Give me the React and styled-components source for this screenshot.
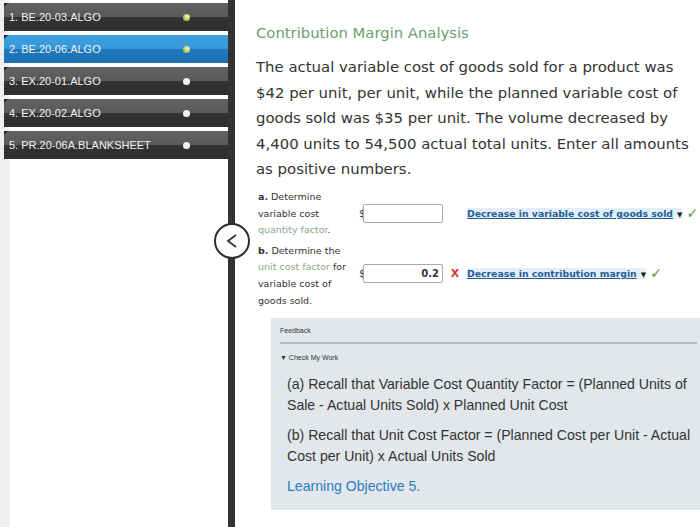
import React from 'react';
import styled, { createGlobalStyle } from 'styled-components';

const GlobalStyle = createGlobalStyle`
  html, body {
    margin: 0;
    padding: 0;
    background: #ffffff;
  }
  body {
    width: 700px;
    height: 527px;
    overflow: hidden;
  }
`;

const Page = styled.div`
  display: flex;
  width: 700px;
  height: 527px;
  overflow: hidden;
`;

const SideBar = styled.div`
  position: relative;
  width: 235px;
  flex-shrink: 0;
  display: flex;
  background: linear-gradient(to right, #efefef 10px, #ffffff 10px);
`;

const ItemList = styled.div`
  flex: 1;
  display: flex;
  flex-direction: column;
  gap: 4px;
  padding: 3px 0 0 4px;
`;

const Item = styled.div`
  position: relative;
  height: 28px;
  display: flex;
  align-items: center;
  justify-content: space-between;
  padding: 0 38px 0 5px;
  font-family: 'Liberation Sans', Arial, sans-serif;
  font-size: 11px;
  color: #f2f2f2;
  background: ${({ active }) =>
    active
      ? 'linear-gradient(to bottom, #3d9fe0 0%, #3698da 50%, #1f78bd 50%, #1b71b5 100%)'
      : 'linear-gradient(to bottom, #626262 0%, #5a5a5a 50%, #333333 50%, #2e2e2e 100%)'};

  &::before {
    content: '';
    position: absolute;
    left: 0;
    top: 0;
    border-top: 4px solid #222;
    border-right: 4px solid transparent;
  }
`;

const Dot = styled.span`
  width: 7px;
  height: 7px;
  border-radius: 50%;
  background: ${({ done }) =>
    done ? 'radial-gradient(circle at 65% 35%, #f3f7d0 0%, #b7cc5f 55%, #8fa53a 100%)' : '#f4f4f4'};
`;

const Divider = styled.div`
  width: 7px;
  background: #333333;
`;

const Toggle = styled.div`
  position: absolute;
  left: 214px;
  top: 223px;
  width: 32px;
  height: 32px;
  border-radius: 50%;
  border: 2px solid #2f2f2f;
  background: #ffffff;
  display: flex;
  align-items: center;
  justify-content: center;
`;

const Main = styled.div`
  flex: 1;
  min-width: 0;
  overflow: hidden;
  padding: 24px 0 0 21px;
  font-family: 'DejaVu Sans', Verdana, sans-serif;
  color: #333333;
`;

const Title = styled.h2`
  margin: 0 0 14px;
  font-size: 14.8px;
  line-height: 17px;
  font-weight: normal;
  color: #6b9e6e;
`;

const Prompt = styled.p`
  margin: 0;
  font-size: 14.9px;
  line-height: 25.6px;
  color: #333333;
  width: 440px;
`;

const PartGrid = styled.div`
  display: grid;
  grid-template-columns: 101px 1fr;
  margin: 6px 0 0 2px;
`;

const PartLabel = styled.div`
  font-size: 9.5px;
  line-height: 16.6px;
  color: #333333;
  margin-top: ${({ gap }) => gap || 0}px;

  b {
    font-weight: bold;
  }
`;

const Term = styled.span`
  color: #86a888;
`;

const AnswerRow = styled.div`
  display: flex;
  align-items: center;
  align-self: start;
  margin-top: ${({ top }) => top}px;
  font-size: 9.5px;
`;

const Dollar = styled.span`
  font-size: 10.5px;
  color: #333;
  width: 4px;
`;

const AmountBox = styled.div`
  width: 80px;
  height: 19px;
  box-sizing: border-box;
  border: 1px solid #a9a9a9;
  border-radius: 2px;
  background: #fff;
  display: flex;
  align-items: center;
  justify-content: flex-end;
  padding-right: 3px;
  font-size: 10px;
  font-weight: bold;
  color: #333;
`;

const Mark = styled.span`
  width: ${({ w }) => w}px;
  text-align: center;
  font-weight: bold;
  font-size: ${({ size }) => size || 11}px;
  color: ${({ color }) => color};
`;

const Select = styled.span`
  font-size: 9.3px;
  font-weight: bold;
  color: #1f5e95;
  text-decoration: underline;
  background: #e3eef8;
  white-space: nowrap;

  small {
    display: inline-block;
    font-size: 7px;
    color: #222;
    margin-left: 4px;
  }
`;

const Feedback = styled.div`
  margin: 9px 0 0 15px;
  width: 440px;
  box-sizing: border-box;
  background: #e2e7eb;
  padding: 9px 3px 12px 9px;
  height: 192px;
  font-family: 'Liberation Sans', Arial, sans-serif;
`;

const FeedbackHead = styled.div`
  font-size: 7px;
  color: #333;
  padding-bottom: 8px;
  border-bottom: 2px solid #b9bcbf;
  width: 417px;
`;

const CheckWork = styled.div`
  font-size: 7px;
  color: #333;
  margin-top: 10px;
`;

const FeedbackBody = styled.div`
  padding: 13px 0 0 7px;
  width: 412px;
  font-size: 14.1px;
  line-height: 20.5px;
  color: #333;

  p {
    margin: 0 0 10px;
  }
`;

const Objective = styled.p`
  color: #2c7cc4;
`;

const items = [
  { label: '1. BE.20-03.ALGO', done: true },
  { label: '2. BE.20-06.ALGO', done: true, active: true },
  { label: '3. EX.20-01.ALGO' },
  { label: '4. EX.20-02.ALGO' },
  { label: '5. PR.20-06A.BLANKSHEET' },
];

const App = () => (
  <Page>
    <GlobalStyle />
    <SideBar>
      <ItemList>
        {items.map(it => (
          <Item key={it.label} active={it.active}>
            <span>{it.label}</span>
            <Dot done={it.done} />
          </Item>
        ))}
      </ItemList>
      <Divider />
      <Toggle>
        <svg width="14" height="16" viewBox="0 0 14 16">
          <path d="M11 2 L3 8 L11 14" fill="none" stroke="#333" strokeWidth="1.8" />
        </svg>
      </Toggle>
    </SideBar>
    <Main>
      <Title>Contribution Margin Analysis</Title>
      <Prompt>
        The actual variable cost of goods sold for a product was $42 per unit, per unit, while
        the planned variable cost of goods sold was $35 per unit. The volume decreased by 4,400
        units to 54,500 actual total units. Enter all amounts as positive numbers.
      </Prompt>
      <PartGrid>
        <PartLabel>
          <b>a.</b> Determine
          <br />
          variable cost
          <br />
          <Term>quantity factor</Term>.
        </PartLabel>
        <AnswerRow top={15}>
          <Dollar>$</Dollar>
          <AmountBox />
          <Mark w={24} />
          <Select>
            Decrease in variable cost of goods sold<small>▼</small>
          </Select>
          <Mark w={20} size={14} color="#4a9a3f">✓</Mark>
        </AnswerRow>
        <PartLabel gap={4}>
          <b>b.</b> Determine the
          <br />
          <Term>unit cost factor</Term> for
          <br />
          variable cost of
          <br />
          goods sold.
        </PartLabel>
        <AnswerRow top={25}>
          <Dollar>$</Dollar>
          <AmountBox>0.2</AmountBox>
          <Mark w={24} color="#d9373b" size={11}>X</Mark>
          <Select>
            Decrease in contribution margin<small>▼</small>
          </Select>
          <Mark w={20} size={14} color="#4a9a3f">✓</Mark>
        </AnswerRow>
      </PartGrid>
      <Feedback>
        <FeedbackHead>Feedback</FeedbackHead>
        <CheckWork>▼ Check My Work</CheckWork>
        <FeedbackBody>
          <p>
            (a) Recall that Variable Cost Quantity Factor = (Planned Units of Sale - Actual Units
            Sold) x Planned Unit Cost
          </p>
          <p>
            (b) Recall that Unit Cost Factor = (Planned Cost per Unit - Actual Cost per Unit) x
            Actual Units Sold
          </p>
          <Objective>Learning Objective 5.</Objective>
        </FeedbackBody>
      </Feedback>
    </Main>
  </Page>
);

export default App;
